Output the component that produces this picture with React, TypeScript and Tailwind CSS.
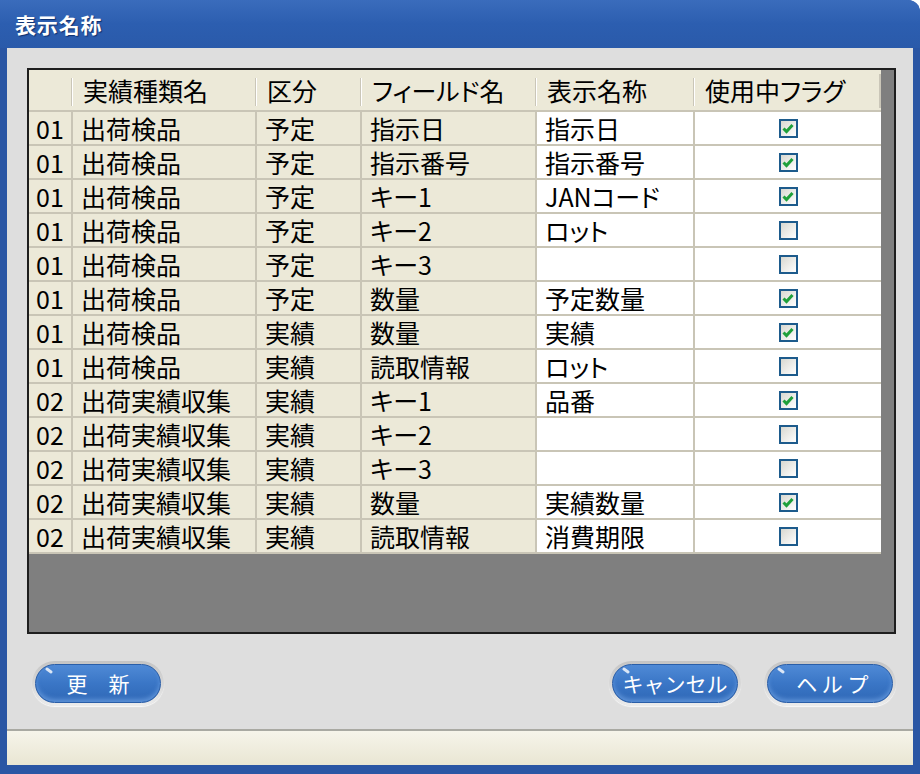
import React from "react";

type Row = {
  no: string;
  kind: string;
  div: string;
  field: string;
  label: string;
  used: boolean;
};

const rows: Row[] = [
  { no: "01", kind: "出荷検品", div: "予定", field: "指示日", label: "指示日", used: true },
  { no: "01", kind: "出荷検品", div: "予定", field: "指示番号", label: "指示番号", used: true },
  { no: "01", kind: "出荷検品", div: "予定", field: "キー1", label: "JANコード", used: true },
  { no: "01", kind: "出荷検品", div: "予定", field: "キー2", label: "ロット", used: false },
  { no: "01", kind: "出荷検品", div: "予定", field: "キー3", label: "", used: false },
  { no: "01", kind: "出荷検品", div: "予定", field: "数量", label: "予定数量", used: true },
  { no: "01", kind: "出荷検品", div: "実績", field: "数量", label: "実績", used: true },
  { no: "01", kind: "出荷検品", div: "実績", field: "読取情報", label: "ロット", used: false },
  { no: "02", kind: "出荷実績収集", div: "実績", field: "キー1", label: "品番", used: true },
  { no: "02", kind: "出荷実績収集", div: "実績", field: "キー2", label: "", used: false },
  { no: "02", kind: "出荷実績収集", div: "実績", field: "キー3", label: "", used: false },
  { no: "02", kind: "出荷実績収集", div: "実績", field: "数量", label: "実績数量", used: true },
  { no: "02", kind: "出荷実績収集", div: "実績", field: "読取情報", label: "消費期限", used: false },
];

const headers = ["", "実績種類名", "区分", "フィールド名", "表示名称", "使用中フラグ"];

function CheckBox({ checked }: { checked: boolean }) {
  return (
    <div className="w-[19px] h-[19px] border-2 border-[#1d5b8c] bg-gradient-to-br from-[#d8d8d0] to-white flex items-center justify-center">
      {checked && (
        <svg width="12" height="11" viewBox="0 0 12 11">
          <path d="M1.5 5.5 L4.5 8.5 L10.5 2" fill="none" stroke="#1fa03a" strokeWidth="3" />
        </svg>
      )}
    </div>
  );
}

function PillButton({ label }: { label: string }) {
  return (
    <div className="p-[3px] rounded-[24px] bg-gradient-to-b from-[#c4c4c4] to-[#ececec] shadow-[0_1px_1px_rgba(255,255,255,0.8)]">
      <div className="relative w-[126px] h-[39px] rounded-[20px] bg-gradient-to-b from-[#4f8ad6] via-[#3a76c6] to-[#2f68b6] border border-[#2a5ea8] flex items-center justify-center shadow-[inset_0_-3px_4px_rgba(120,170,235,0.6)]">
        <span className="absolute left-[9px] top-[4px] w-[8px] h-[3px] rounded-full bg-white/80 rotate-[35deg]" />
        <span className="text-white text-[21px] leading-none whitespace-pre">{label}</span>
      </div>
    </div>
  );
}

export default function App() {
  const font = { fontFamily: '"Noto Sans CJK JP", "Noto Sans", sans-serif' };
  return (
    <div className="w-[920px] h-[774px] bg-[#2a56a4] rounded-tr-[12px] rounded-tl-[4px] flex flex-col" style={font}>
      {/* Title bar */}
      <div className="h-[48px] flex items-center px-[15px] pt-[2px] rounded-tr-[12px] bg-gradient-to-b from-[#3a6cbc] via-[#2c5eb0] to-[#2a5aaa]">
        <span className="text-white text-[21px] font-bold tracking-[0.04em] [text-shadow:1px_1px_1px_#0d2f6e]">表示名称</span>
      </div>

      <div className="flex-1 flex flex-col mx-[7px] mb-[9px]">
        {/* Main area */}
        <div className="flex-1 bg-[#dedede] pt-[20px] pl-[20px] pr-[17px] flex flex-col">
          <div className="h-[566px] border-2 border-[#1e1e1e] bg-[#7f7f7f]">
            <div className="grid grid-cols-[44px_184px_105px_175px_158px_186px] w-[852px] text-[25px] text-black [font-feature-settings:'palt']">
              {headers.map((h, i) => (
                <div
                  key={"h" + i}
                  className="h-[42px] bg-[#ece9d8] border-b-2 border-[#c9c5b6] flex items-center relative pl-[10px]"
                >
                  {i < headers.length - 1 && (
                    <span className="absolute right-0 top-[8px] h-[28px] w-[2px] bg-[#cac6b8] border-r border-white" />
                  )}
                  {i === headers.length - 1 && (
                    <span className="absolute right-0 top-[4px] h-[34px] w-[2px] bg-[#cac6b8]" />
                  )}
                  <span className="leading-none">{h}</span>
                </div>
              ))}
              {rows.map((r, ri) => {
                const cells = [r.no, r.kind, r.div, r.field, r.label];
                return (
                  <React.Fragment key={ri}>
                    {cells.map((c, ci) => (
                      <div
                        key={ci}
                        className={
                          "h-[34px] border-r-2 border-b-2 border-[#c9c5b6] flex items-center leading-none " +
                          (ci === 0 ? "pl-[7px] " : "pl-[8px] ") +
                          (ci === 4 ? "bg-white" : "bg-[#ece9d8]")
                        }
                      >
                        {c}
                      </div>
                    ))}
                    <div className="h-[34px] border-b-2 border-[#c9c5b6] bg-white flex items-center justify-center">
                      <CheckBox checked={r.used} />
                    </div>
                  </React.Fragment>
                );
              })}
            </div>
          </div>

          {/* Buttons */}
          <div className="mt-[27px] flex items-center">
            <div className="ml-[5px]">
              <PillButton label="更　新" />
            </div>
            <div className="ml-auto flex gap-[23px]">
              <PillButton label="キャンセル" />
              <PillButton label=" ヘ ル プ" />
            </div>
          </div>
        </div>

        {/* Status bar */}
        <div className="h-[36px] border-t-2 border-[#a9a9a2] bg-gradient-to-b from-[#f6f4ea] to-[#e9e6d3]" />
      </div>
    </div>
  );
}
